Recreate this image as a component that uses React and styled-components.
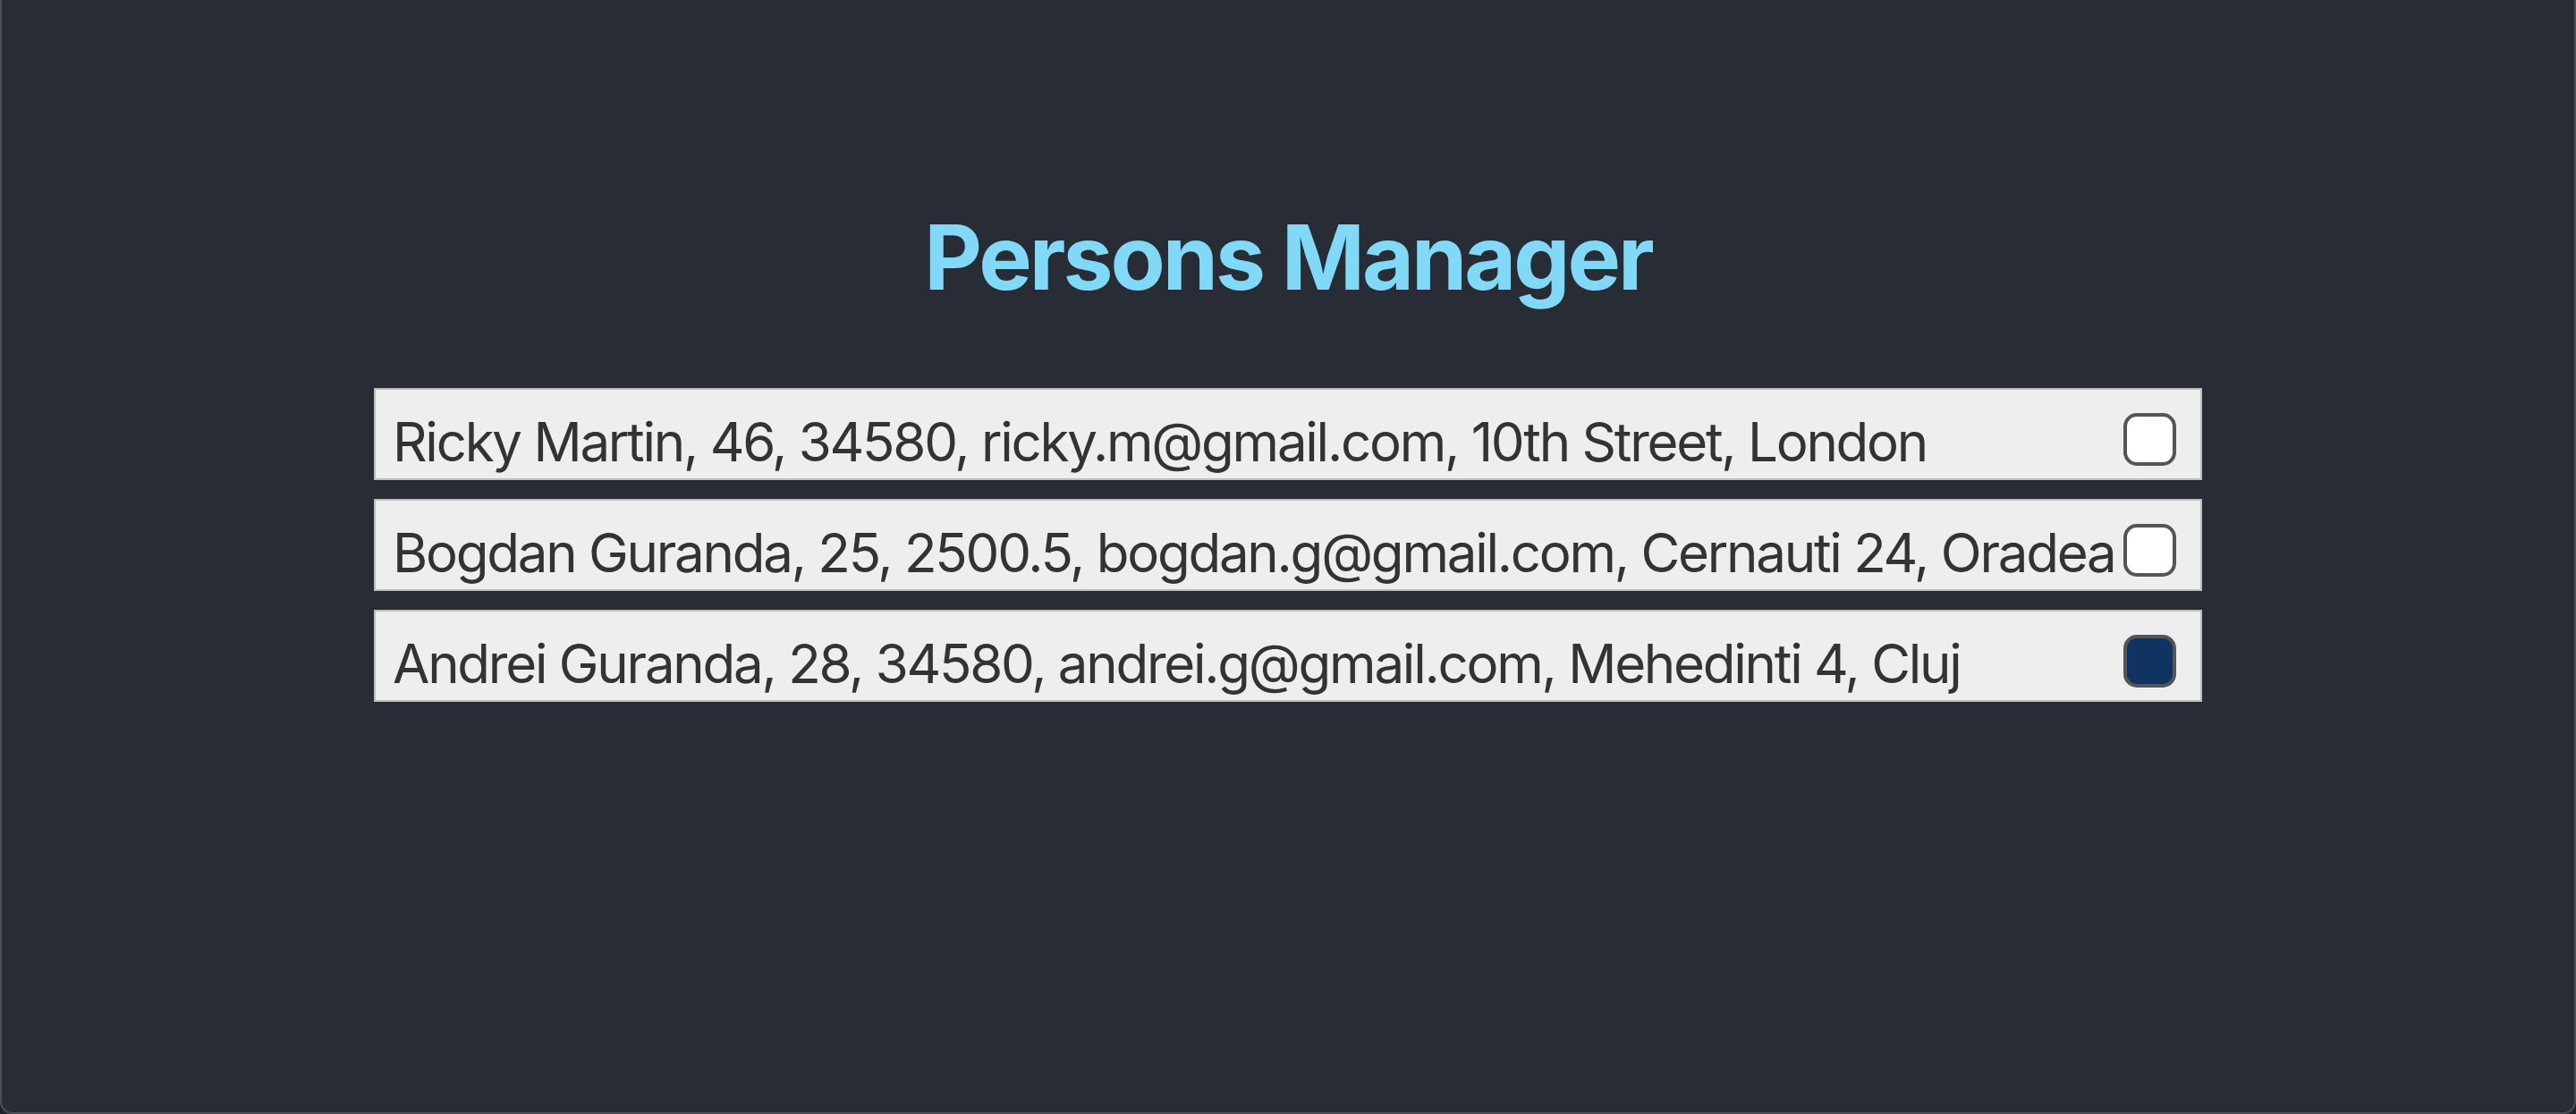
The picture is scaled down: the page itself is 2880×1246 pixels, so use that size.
import React, { useState } from "react";
import styled, { createGlobalStyle } from "styled-components";

const GlobalStyle = createGlobalStyle`
  html, body {
    margin: 0;
    padding: 0;
    background: #1f2228;
  }
  * { box-sizing: border-box; }
`;

const Frame = styled.div`
  height: 1246px;
  background: #282c34;
  border: 2px solid #4b5058;
  border-top: none;
  border-radius: 0 0 14px 14px;
  display: flex;
  flex-direction: column;
  align-items: center;
  padding-top: 228px;
  font-family: Inter, "Noto Sans", sans-serif;
`;

const Title = styled.h1`
  margin: 0 0 86px;
  font-size: 100px;
  line-height: 120px;
  font-weight: 700;
  color: #80d9f7;
  letter-spacing: -3px;
`;

const List = styled.div`
  width: 2044px;
  display: flex;
  flex-direction: column;
  gap: 21px;
`;

const Row = styled.label`
  display: flex;
  align-items: flex-start;
  height: 103px;
  padding: 22px 27px 5px 19px;
  background: #eeeeee;
  border: 2px solid #bdbdbd;
`;

const Text = styled.span`
  flex: none;
  font-size: 60px;
  line-height: 72px;
  color: #333333;
  white-space: nowrap;
  letter-spacing: -2.25px;
`;

const Check = styled.span`
  flex: none;
  width: 59px;
  height: 59px;
  margin-top: 4px;
  margin-left: auto;
  border: 4px solid #555555;
  border-radius: 15px;
  background: ${(p) => (p.$checked ? "#0f3461" : "#ffffff")};
`;

const persons = [
  { text: "Ricky Martin, 46, 34580, ricky.m@gmail.com, 10th Street, London", checked: false },
  { text: "Bogdan Guranda, 25, 2500.5, bogdan.g@gmail.com, Cernauti 24, Oradea", checked: false },
  { text: "Andrei Guranda, 28, 34580, andrei.g@gmail.com, Mehedinti 4, Cluj", checked: true },
];

export default function App() {
  const [items, setItems] = useState(persons);
  const toggle = (i) =>
    setItems((prev) => prev.map((p, j) => (j === i ? { ...p, checked: !p.checked } : p)));
  return (
    <>
      <GlobalStyle />
      <Frame>
        <Title>Persons Manager</Title>
        <List>
          {items.map((p, i) => (
            <Row key={i} onClick={() => toggle(i)}>
              <Text>{p.text}</Text>
              <Check $checked={p.checked} role="checkbox" aria-checked={p.checked} />
            </Row>
          ))}
        </List>
      </Frame>
    </>
  );
}
